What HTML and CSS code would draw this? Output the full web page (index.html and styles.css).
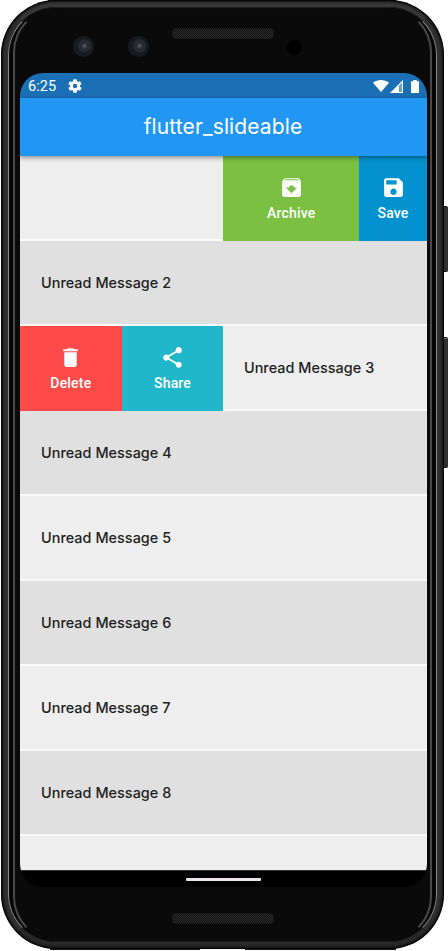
FILE: index.html
```html
<!DOCTYPE html>
<html lang="en">
<head>
<meta charset="utf-8">
<title>flutter_slideable</title>
<link rel="stylesheet" href="styles.css">
</head>
<body>
<div class="stage">
  <i class="button power"></i><i class="button volume"></i>
  <i class="edge edge-top"></i><i class="edge edge-bottom"></i>
  <div class="phone"><div class="rim"><div class="groove"><div class="face">
    <div class="top-bezel">
      <i class="camera cam-a"></i><i class="camera cam-b"></i><i class="speaker"></i><i class="sensor"></i>
    </div>
    <main class="screen">
      <div class="status">
        <span class="time">6:25</span>
        <svg class="gear" viewBox="2 2 20 20"><path fill="currentColor" d="M19.14 12.94c.04-.3.06-.61.06-.94s-.02-.64-.07-.94l2.03-1.58a.49.49 0 0 0 .12-.61l-1.92-3.32a.49.49 0 0 0-.59-.22l-2.39.96a7 7 0 0 0-1.62-.94l-.36-2.54A.48.48 0 0 0 13.92 2.4h-3.84a.48.48 0 0 0-.48.41l-.36 2.54c-.59.24-1.13.56-1.62.94l-2.39-.96a.48.48 0 0 0-.59.22L2.72 8.87a.48.48 0 0 0 .12.61l2.03 1.58a6 6 0 0 0 0 1.88l-2.03 1.58a.49.49 0 0 0-.12.61l1.92 3.32c.12.22.37.29.59.22l2.39-.96c.5.38 1.03.7 1.62.94l.36 2.54c.05.24.24.41.48.41h3.84c.24 0 .44-.17.47-.41l.36-2.54a7 7 0 0 0 1.62-.94l2.39.96c.22.08.47 0 .59-.22l1.92-3.32a.48.48 0 0 0-.12-.61zM12 15.1a3.1 3.1 0 1 1 0-6.2 3.1 3.1 0 0 1 0 6.2z"/></svg>
        <span class="signals">
          <svg width="16" height="12" viewBox="0 0 16 12"><path fill="#fff" d="M0 2.800C4.600-.9 11.400-.9 16 2.800L8 12z"/></svg>
          <svg width="13" height="13" viewBox="0 0 13 13"><path fill="#fff" d="M0 13 13 0v13z"/><path fill="#1b70b5" d="M9.300 5.500 12 2.800v9.200H9.300z"/><path fill="#fff" opacity=".35" d="M10 5 12 3v9h-2z"/></svg>
          <svg class="battery" width="8" height="13" viewBox="0 0 8 13"><path fill="#fff" d="M2.300 0h3.400v1.200H8V13H0V1.200h2.300z"/></svg>
        </span>
      </div>
      <header class="appbar">flutter_slideable</header>
      <div class="list">
        <div class="row slid-left">
          <div class="spacer"></div>
          <div class="action archive"><svg viewBox="0 0 24 24"><path fill="currentColor" d="m20.540 5.230-1.390-1.680C18.880 3.210 18.470 3 18 3H6c-.47 0-.88.210-1.160.550L3.460 5.230C3.170 5.570 3 6.020 3 6.500V19c0 1.100.9 2 2 2h14c1.100 0 2-.9 2-2V6.500c0-.48-.17-.93-.46-1.270zM12 17.500 6.500 12H10v-2h4v2h3.500L12 17.500zM5.120 5l.81-1h12l.94 1H5.120z"/></svg>Archive</div>
          <div class="action save"><svg viewBox="0 0 24 24"><path fill="currentColor" d="M17 3H5a2 2 0 0 0-2 2v14c0 1.100.89 2 2 2h14c1.100 0 2-.9 2-2V7l-4-4zm-5 16c-1.660 0-3-1.340-3-3s1.340-3 3-3 3 1.340 3 3-1.340 3-3 3zm3-10H5V5h10v4z"/></svg>Save</div>
        </div>
        <div class="row dark"><span>Unread Message 2</span></div>
        <div class="row slid-right">
          <div class="action delete"><svg viewBox="0 0 24 24"><path fill="currentColor" d="M6 19c0 1.100.9 2 2 2h8c1.100 0 2-.9 2-2V7H6v12zM19 4h-3.500l-1-1h-5l-1 1H5v2h14V4z"/></svg>Delete</div>
          <div class="action share"><svg viewBox="0 0 24 24"><path fill="currentColor" d="M18 16.080c-.76 0-1.440.3-1.960.770L8.910 12.700c.05-.23.09-.46.09-.7s-.04-.47-.09-.7l7.050-4.110c.54.5 1.250.810 2.040.810 1.660 0 3-1.340 3-3s-1.340-3-3-3-3 1.340-3 3c0 .24.040.47.090.7L8.040 9.810C7.500 9.310 6.790 9 6 9c-1.660 0-3 1.340-3 3s1.340 3 3 3c.79 0 1.500-.31 2.040-.81l7.120 4.160c-.05.21-.08.430-.08.650 0 1.610 1.310 2.920 2.920 2.920s2.920-1.310 2.920-2.920-1.310-2.920-2.920-2.920z"/></svg>Share</div>
          <div class="message"><span>Unread Message 3</span></div>
        </div>
        <div class="row dark"><span>Unread Message 4</span></div>
        <div class="row"><span>Unread Message 5</span></div>
        <div class="row dark"><span>Unread Message 6</span></div>
        <div class="row"><span>Unread Message 7</span></div>
        <div class="row dark"><span>Unread Message 8</span></div>
        <div class="row"></div>
      </div>
      <div class="nav"><i></i></div>
    </main>
    <div class="bottom-bezel"><i class="speaker"></i></div>
  </div></div></div></div>
</div>
</body>
</html>
```
FILE: styles.css
```css
* { box-sizing: border-box; }
body { margin: 0; background: #fff; font-family: Roboto, sans-serif; }
.stage { position: relative; width: 448px; height: 951px; overflow: hidden; }
.button { position: absolute; right: 0; width: 5px; background: #30302f; border: 1px solid #151515; border-right: 0; border-radius: 0 2px 2px 0; }
.power { top: 206px; height: 66px; }
.volume { top: 337px; height: 131px; border-left: 0; box-shadow: inset 1px 1px #777; }
.edge { position: absolute; height: 2px; background: #161616; }
.edge-top { top: 0; left: 48px; width: 348px; }
.edge-bottom { top: 948px; left: 50px; width: 346px; }
.edge-bottom::after { content: ""; position: absolute; top: 1px; left: 150px; width: 45px; height: 2px; background: #fff; }
.phone { position: relative; margin-left: 1px; width: 443px; height: 949px; border-radius: 55px; background: #0b0b0b; padding: 1px; }
.phone::after { content: ""; position: absolute; inset: 0; border-radius: 55px; box-shadow: inset 0 0 3px 2px #000b; pointer-events: none; }
.rim { height: 100%; border-radius: 54px; border: 6px solid #303030; border-top-color: #383838; border-bottom-color: #2a2a2a; background: #050505; }
.groove { height: 100%; border-radius: 48px; border: 1px solid #8b8b8b; border-top-color: #1c1c1c; border-bottom-color: #1c1c1c; padding: 0 4px; background: #050505; }
.face { height: 100%; border-radius: 44px; border: 2px solid #49494d; border-top-color: #0b0b0b; border-bottom-color: #0b0b0b; background: #0a0a0a; padding: 0 5px; display: flex; flex-direction: column; }
.top-bezel { position: relative; flex: 0 0 63px; }
.camera { position: absolute; top: 26px; width: 21px; height: 21px; border-radius: 50%; background: radial-gradient(circle at 55% 47%, #53545b 0 1px, #292a30 3px 6px, #141b21 7px 12px); }
.cam-a { left: 53px; }
.cam-b { left: 108px; }
.speaker { position: absolute; left: 152px; width: 102px; height: 11px; border-radius: 4px; background: repeating-conic-gradient(#272727 0 25%, #151515 0 50%) 0 0 / 2px 2px; border: 1px solid #191919; }
.top-bezel .speaker { top: 18px; }
.sensor { position: absolute; left: 267px; top: 30px; width: 15px; height: 15px; border-radius: 50%; background: #000; }
.screen { flex: 0 0 814px; width: 407px; overflow: hidden; border-radius: 23px; display: flex; flex-direction: column; background: #000; }
.status { flex: 0 0 25px; display: flex; align-items: center; padding: 1px 8px 0; background: #1b70b5; color: #fff; font-size: 14.500px; }
.time { letter-spacing: .1px; }
.gear { width: 14px; height: 14px; margin-left: 12px; }
.signals { margin-left: auto; display: flex; align-items: center; gap: 1px; }
.battery { margin-left: 7px; }
.appbar { position: relative; flex: 0 0 58px; background: #2196f3; color: #fff; font: 400 21px/58px Inter, sans-serif; letter-spacing: .12px; text-align: center; padding-right: 1px; box-shadow: 0 1px 4px #0005, 0 3px 5px #0002; }
.list { flex: 0 0 714px; overflow: hidden; }
.row { height: 85px; display: flex; align-items: center; padding-left: 21px; background: #eee; border-bottom: 2px solid #fafafa; color: #212121; font: 550 14.400px Inter, sans-serif; letter-spacing: .04px; }
.dark { background: #e0e0e0; }
.slid-left, .slid-right { padding: 0; border: 0; background: #eee; }
.spacer { width: 203.400px; height: 100%; border-bottom: 2px solid #fafafa; }
.action { height: 85px; display: flex; flex-direction: column; align-items: center; padding-top: 19px; gap: 5px; color: #fff; font: 500 14px/16px Roboto, sans-serif; letter-spacing: .18px; }
.action svg { width: 25px; height: 25px; flex: none; }
.archive { width: 135.600px; background: #7bc043; }
.save { width: 68px; background: #0392cf; }
.save svg { position: relative; left: .5px; }
.delete { width: 101.700px; background: #fe4a49; }
.share { width: 101.700px; background: #21b7ca; }
.message { flex: 1; height: 100%; display: flex; align-items: center; padding-left: 20.600px; border-bottom: 2px solid #fafafa; }
.nav { flex: 1; display: flex; align-items: flex-start; justify-content: center; padding-top: 7px; border-top: 1px solid #333; }
.nav i { width: 75px; height: 3px; border-radius: 1px; background: #ece6ec; }
.bottom-bezel { position: relative; flex: 1; }
.bottom-bezel .speaker { top: 26px; }
```
